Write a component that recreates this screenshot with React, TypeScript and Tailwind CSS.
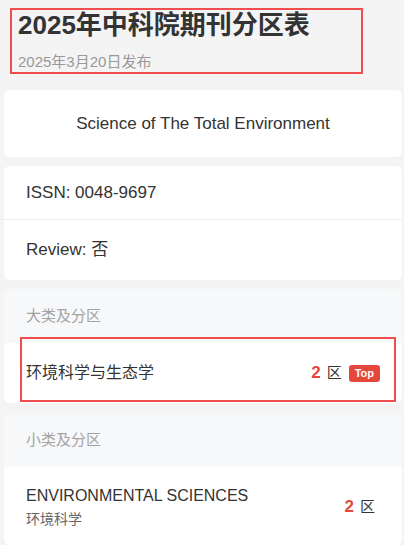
const font = { fontFamily: '"Liberation Sans", Arial, "Noto Sans CJK SC", sans-serif' };

function SectionHeader({ label }: { label: string }) {
  return (
    <div className="flex h-[54px] items-center bg-[#f7f8fa] px-[22px] text-[15px] text-[#a3a3a3]">
      {label}
    </div>
  );
}

export default function App() {
  return (
    <div className="min-h-screen bg-[#f4f4f4] pt-[8px] pb-6 text-[#333]" style={font}>
      <div className="ml-[10px] w-[353px] border-2 border-[#f04e4e] px-[6px]">
        <h1 className="text-[26px] font-bold leading-[30px] text-[#333]">2025年中科院期刊分区表</h1>
        <p className="mt-[12px] text-[15px] leading-[20px] text-[#999]">2025年3月20日发布</p>
      </div>

      <div className="ml-[4px] mr-[2px] mt-[16px] flex h-[67px] items-center justify-center rounded-[6px] bg-white text-[17px]">
        Science of The Total Environment
      </div>

      <div className="ml-[4px] mr-[2px] mt-[9px] rounded-[6px] bg-white text-[17px]">
        <div className="flex h-[54px] items-center border-b border-[#eeeeee] px-[22px]">ISSN: 0048-9697</div>
        <div className="flex h-[60px] items-center px-[22px]">Review: 否</div>
      </div>

      <div className="relative ml-[4px] mr-[2px] mt-[9px] overflow-hidden rounded-[6px] bg-white">
        <SectionHeader label="大类及分区" />
        <div className="flex h-[60px] items-center justify-between px-[22px]">
          <span className="text-[16px]">环境科学与生态学</span>
          <div className="flex items-center">
            <span className="text-[17px] font-bold text-[#e5483b]">2</span>
            <span className="ml-[6px] text-[15px]">区</span>
            <span className="ml-[7px] flex h-[17px] items-center rounded-[3px] bg-[#e5483b] px-[6px] text-[11px] font-bold text-white">
              Top
            </span>
          </div>
        </div>
        <div className="pointer-events-none absolute bottom-[1px] left-[16px] right-[6px] top-[48px] border-2 border-[#f04e4e]" />
      </div>

      <div className="ml-[4px] mr-[2px] mt-[10px] overflow-hidden rounded-[6px] bg-white">
        <SectionHeader label="小类及分区" />
        <div className="flex items-center justify-between pl-[22px] pr-[27px] pt-[18px] pb-[16px]">
          <div>
            <div className="text-[16px] leading-[22px]">ENVIRONMENTAL SCIENCES</div>
            <div className="mt-[2px] text-[14px] leading-[20px] text-[#666]">环境科学</div>
          </div>
          <div className="flex items-center">
            <span className="text-[17px] font-bold text-[#e5483b]">2</span>
            <span className="ml-[6px] text-[15px]">区</span>
          </div>
        </div>
      </div>
    </div>
  );
}
